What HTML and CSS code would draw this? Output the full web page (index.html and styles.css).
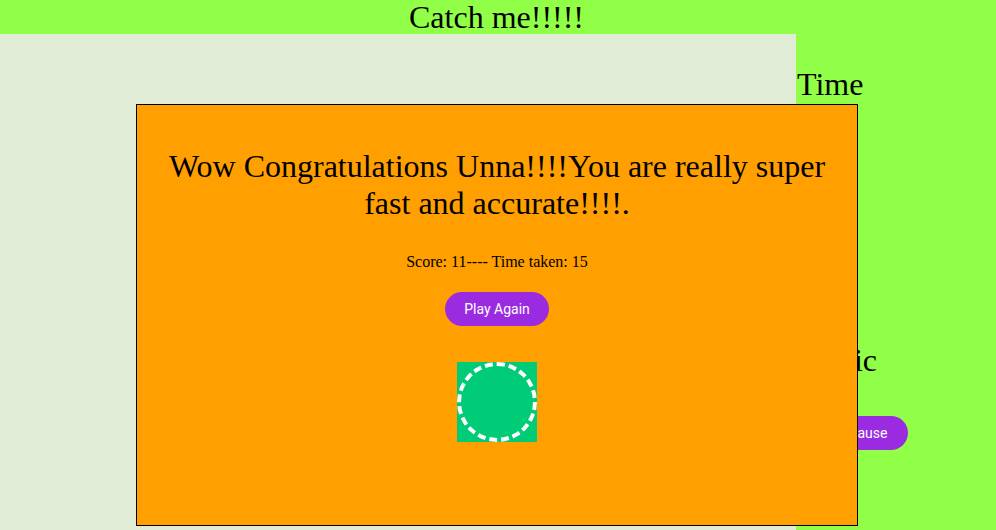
FILE: index.html
```html
<!DOCTYPE html>
<html>
<head>
<meta charset="utf-8">
<link rel="stylesheet" href="styles.css">
</head>
<body>
<h1 class="title">Catch me!!!!!</h1>
<div class="main">
  <div class="game"></div>
  <div class="side">
    <div class="label time">Time</div>
    <div class="label music">Music</div>
    <button class="btn pause">Pause</button>
  </div>
</div>
<div class="modal">
  <h2 class="msg">Wow Congratulations Unna!!!!You are really super fast and accurate!!!!.</h2>
  <p class="score">Score: 11---- Time taken: 15</p>
  <button class="btn again">Play Again</button>
  <div class="target"><div class="ring"></div></div>
</div>
</body>
</html>
```
FILE: styles.css
```css
html, body {
  margin: 0;
  padding: 0;
  height: 100%;
  overflow: hidden;
}
body {
  background: #91ff47;
  font-family: "Liberation Serif", "Times New Roman", serif;
  color: #000;
}
.title {
  margin: 0;
  height: 34px;
  line-height: 34px;
  font-size: 32px;
  font-weight: normal;
  text-align: center;
  padding-right: 3px;
}
.main {
  display: flex;
  height: 496px;
}
.game {
  width: 796px;
  background: #e0ecd6;
}
.side {
  flex: 1;
  display: flex;
  flex-direction: column;
  align-items: flex-start;
  padding-left: 1px;
}
.label {
  font-size: 32px;
  line-height: 37px;
}
.time {
  margin-top: 32px;
}
.music {
  margin-top: 239px;
}
.btn {
  background: #9b2be0;
  color: #fff;
  border: none;
  border-radius: 17px;
  height: 34px;
  font-family: Roboto, "Liberation Sans", sans-serif;
  font-size: 14px;
  font-weight: normal;
  padding: 0 20px;
}
.pause {
  margin-top: 37px;
  margin-left: 31px;
  width: 80px;
  padding: 0;
}
.modal {
  position: absolute;
  left: 136px;
  top: 104px;
  width: 720px;
  height: 420px;
  border: 1px solid #000;
  background: #ff9f00;
  display: flex;
  flex-direction: column;
  align-items: center;
  box-sizing: content-box;
}
.msg {
  margin: 43px 20px 0;
  font-size: 32px;
  font-weight: normal;
  line-height: 37px;
  text-align: center;
}
.score {
  margin: 31px 0 0;
  font-size: 16px;
  line-height: 18px;
}
.again {
  margin-top: 21px;
  width: 104px;
  padding: 0;
}
.target {
  margin-top: 36px;
  width: 80px;
  height: 80px;
  background: #00cc77;
}
.ring {
  width: 80px;
  height: 80px;
  box-sizing: border-box;
  border: 4px dashed #fff;
  border-radius: 50%;
}
```
